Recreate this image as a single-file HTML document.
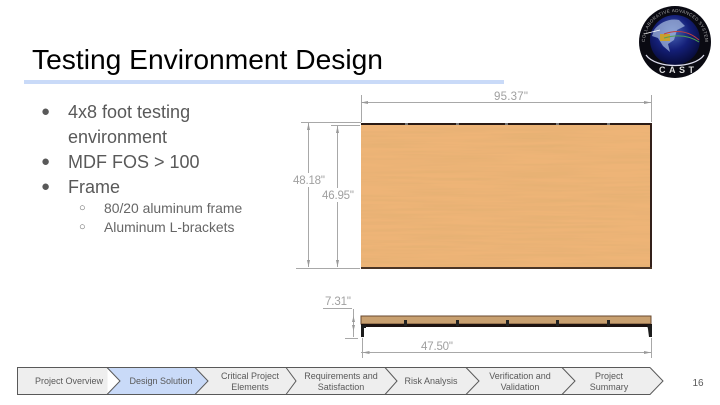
<!DOCTYPE html>
<html><head><meta charset="utf-8"><style>
html,body{margin:0;padding:0;background:#fff}
#s{position:relative;width:720px;height:405px;overflow:hidden;font-family:"Liberation Sans",sans-serif;background:#fff}
.t{position:absolute;white-space:nowrap}
.b{color:#595959;font-size:18px;line-height:24px}
.d{color:#595959;font-size:15px;line-height:24px}
.c{color:#666;font-size:13.900px;line-height:19px}
.o{color:#666;font-size:11px;line-height:19px}
</style></head><body><div id="s">
<div class="t" style="left:32px;top:42px;font-size:28.2px;line-height:34px;color:#000">Testing Environment Design</div>
<div style="position:absolute;left:24px;top:80px;width:480px;height:4px;background:#c9daf8"></div>
<div class="t d" style="left:41px;top:100px">●</div>
<div class="t b" style="left:68px;top:100px">4x8 foot testing</div>
<div class="t b" style="left:68px;top:125px">environment</div>
<div class="t d" style="left:41px;top:150px">●</div>
<div class="t b" style="left:68px;top:150px">MDF FOS &gt; 100</div>
<div class="t d" style="left:41px;top:175px">●</div>
<div class="t b" style="left:68px;top:175px">Frame</div>
<div class="t o" style="left:79px;top:199px">○</div>
<div class="t c" style="left:104px;top:199px">80/20 aluminum frame</div>
<div class="t o" style="left:79px;top:218px">○</div>
<div class="t c" style="left:104px;top:218px">Aluminum L-brackets</div>

<svg width="720" height="405" style="position:absolute;left:0;top:0" font-family="Liberation Sans, sans-serif">
<defs>
<filter id="g" x="0" y="0" width="100%" height="100%"><feTurbulence type="fractalNoise" baseFrequency="0.012 0.35" numOctaves="2" seed="4"/><feColorMatrix values="0 0 0 0 0.72  0 0 0 0 0.42  0 0 0 0 0.16  0.9 0 0 0 -0.28"/></filter>
<radialGradient id="e" cx="45%" cy="35%" r="70%"><stop offset="0" stop-color="#4a66b8"/><stop offset=".5" stop-color="#141f78"/><stop offset="1" stop-color="#050830"/></radialGradient>
</defs>
<!-- top board -->
<rect x="361" y="123" width="290" height="145" fill="#eeb477"/>
<rect x="361" y="123" width="290" height="145" filter="url(#g)"/>
<rect x="361" y="123" width="291" height="2" fill="#2a1a14"/>
<rect x="650" y="123" width="2" height="146" fill="#33201a"/>
<rect x="361" y="267" width="291" height="2" fill="#4a3526"/>
<g fill="#777"><rect x="405" y="123" width="3" height="2"/><rect x="456" y="123" width="3" height="2"/><rect x="505" y="123" width="3" height="2"/><rect x="556" y="123" width="3" height="2"/><rect x="607" y="123" width="3" height="2"/></g>
<!-- dims -->
<g stroke="#a8a8a8" stroke-width="1" fill="none" shape-rendering="crispEdges">
<path d="M361.500 95V122M651.500 95V122M361 102.500H651"/>
<path d="M301 122.500H361M331 125.500H360M308.500 123V267M337.500 126V267M296 268.500H360"/>
<path d="M323 308.500H352M345 338.500H358M353.500 309V337M362.500 338V358M361 352.500H651M651.500 338V358"/>
</g>
<g fill="#999">
<path d="M361 102.500l7-1.500v3zM651 102.500l-7-1.500v3zM308.500 123l-1.500 7h3zM308.500 267l-1.500-7h3zM337.500 126l-1.500 7h3zM337.500 267l-1.500-7h3zM353.500 316l-1.500 6h3zM353.500 331l-1.500-6h3zM362.500 352.500l7-1.500v3zM651 352.500l-7-1.500v3z"/>
</g>
<rect x="292" y="173" width="34" height="14" fill="#fff"/>
<rect x="321" y="188" width="34" height="14" fill="#fff"/>
<g fill="#a0a0a0" font-size="11.500">
<text x="494" y="100" textLength="34">95.37"</text>
<text x="293" y="184" textLength="32">48.18"</text>
<text x="322" y="199" textLength="32">46.95"</text>
<text x="325" y="305" textLength="26">7.31"</text>
<text x="421" y="350" textLength="32">47.50"</text>
</g>
<!-- side board -->
<rect x="361" y="316" width="290" height="8" fill="#c8a070" stroke="#6a4a30" stroke-width="1"/>
<rect x="361" y="324" width="291" height="3" fill="#1c1210"/>
<path d="M361 325h5v3h-2v9h-3zM647 325h5v3l0 9h-3l-1-8z" fill="#1c1c1c"/>
<g fill="#222"><rect x="404" y="320" width="3" height="6"/><rect x="456" y="320" width="3" height="6"/><rect x="506" y="320" width="3" height="6"/><rect x="556" y="320" width="3" height="6"/><rect x="607" y="320" width="3" height="6"/></g>
<!-- logo -->
<circle cx="675" cy="42" r="36" fill="#0a0a12"/>
<circle cx="675" cy="40" r="25" fill="url(#e)"/>
<path d="M654 30c6-8 16-12 25-10l6 6-8 4-3 10-6 4 2 8-7-6-5-8-6-2z" fill="#a8bce0" opacity=".7"/>
<rect x="660" y="34" width="10" height="7" fill="#c8a030"/>
<path d="M664 34c14-5 26-2 35 6" stroke="#c04040" stroke-width="1" fill="none"/>
<path d="M664 38c14-4 26-2 35 4" stroke="#50a050" stroke-width="1" fill="none"/>
<path d="M646 55c10 14 48 14 58 0" stroke="#dde" stroke-width="1.200" fill="none"/>
<path d="M644 34L660 30" stroke="#fff" stroke-width=".7"/>
<text x="659" y="73" font-size="9" font-weight="bold" fill="#ddd" letter-spacing="3.500">CAST</text>
<path id="ta" d="M645 42A30 30 0 0 1 705 42" fill="none"/>
<text font-size="4.500" fill="#aaa" letter-spacing=".4"><textPath href="#ta">COLLABORATIVE ADVANCED SYSTEM TEST</textPath></text>
<!-- chevron bar -->
<rect x="17.500" y="367.500" width="90" height="27" fill="#eee"/>
<path d="M107 367.500H195L208 381 195 394.500H107L120 381z" fill="#c9daf8"/>
<path d="M195 367.500H650L663 381 650 394.500H195L208 381z" fill="#eee"/>
<g fill="none" stroke="#595959" stroke-width="1">
<path d="M650 367.500L663 381 650 394.500H17.500V367.500H650"/>
<path d="M107 367.500L120 381 107 394.500M195 367.500L208 381 195 394.500M286 367.500L296 381 286 394.500M385 367.500L397 381 385 394.500M466 367.500L479 381 466 394.500M562 367.500L575 381 562 394.500"/>
</g>
<g font-size="9" fill="#595959" text-anchor="middle">
<text x="69" y="384">Project Overview</text>
<text x="161" y="384">Design Solution</text>
<text x="250" y="379">Critical Project</text><text x="250" y="390">Elements</text>
<text x="341" y="379">Requirements and</text><text x="341" y="390">Satisfaction</text>
<text x="431" y="384">Risk Analysis</text>
<text x="520" y="379">Verification and</text><text x="520" y="390">Validation</text>
<text x="609" y="379">Project</text><text x="609" y="390">Summary</text>
</g>
<text x="698" y="386" font-size="10" fill="#595959" text-anchor="middle">16</text>
</svg>
</div></body></html>
